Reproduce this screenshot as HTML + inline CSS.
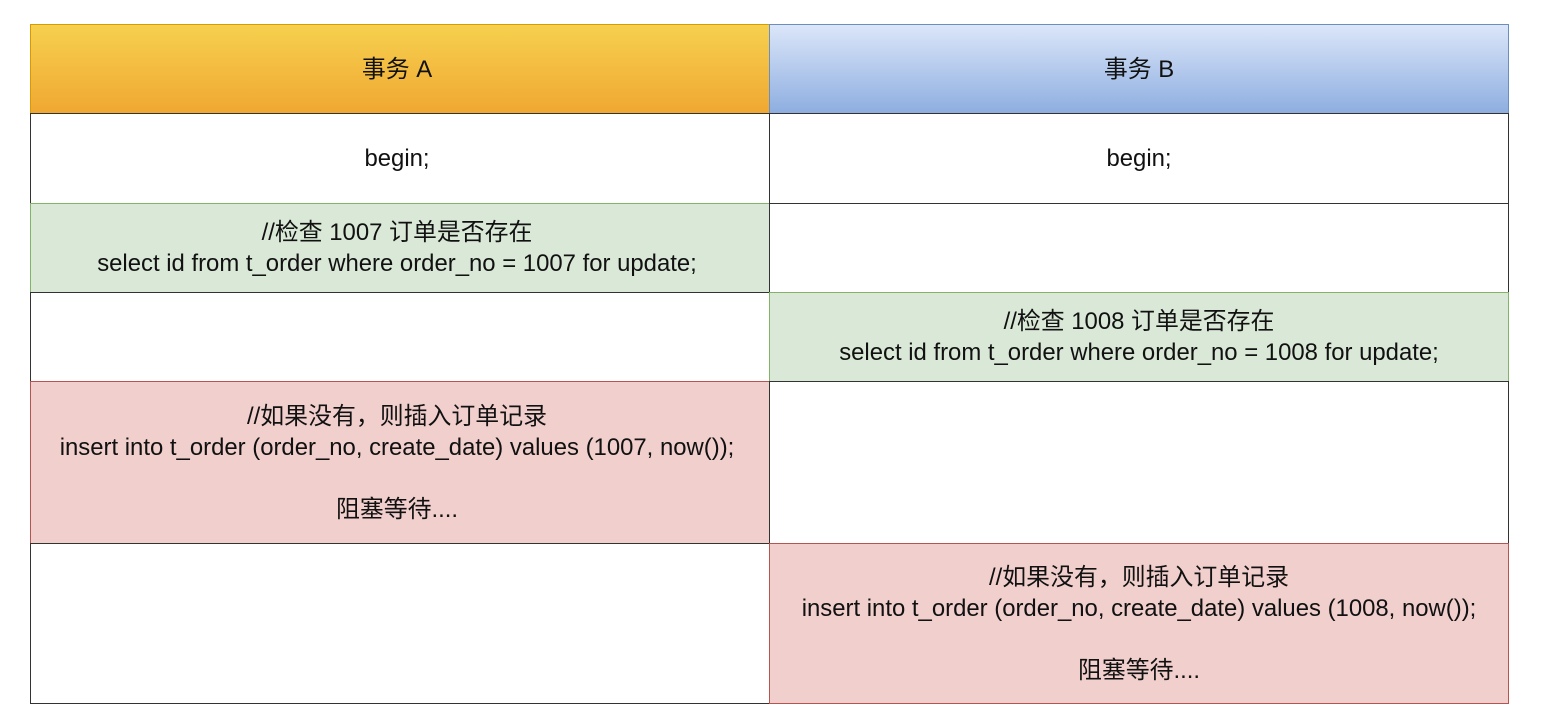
<!DOCTYPE html>
<html><head><meta charset="utf-8"><style>
body{margin:0;width:1542px;height:724px;background:#fff;position:relative;overflow:hidden;font-family:"Liberation Sans","Noto Sans CJK SC",sans-serif;color:#111;}
.c{position:absolute;box-sizing:border-box;display:flex;flex-direction:column;align-items:center;justify-content:center;text-align:center;font-size:23.9px;line-height:31px;border:1px solid #333;background:#fff;white-space:nowrap;}
.ha{background:linear-gradient(#f6d04e,#f0a832);border-color:#d79b00;}
.hb{background:linear-gradient(#dbe6f9,#8eaee0);border-color:#6c8ebf;}
.g{background:#dae8d7;border-color:#82b366;}
.r{background:#f1cfcd;border-color:#b85450;}
.l{padding-right:6px;}
</style></head><body>
<div class="c ha l" style="left:30px;top:24px;width:740px;height:90px">事务 A</div>
<div class="c hb" style="left:769px;top:24px;width:740px;height:90px">事务 B</div>
<div class="c l" style="left:30px;top:113px;width:740px;height:91px">begin;</div>
<div class="c" style="left:769px;top:113px;width:740px;height:91px">begin;</div>
<div class="c g l" style="left:30px;top:203px;width:740px;height:90px"><div>//检查 1007 订单是否存在</div><div>select id from t_order where order_no = 1007 for update;</div></div>
<div class="c" style="left:769px;top:203px;width:740px;height:90px"></div>
<div class="c" style="left:30px;top:292px;width:740px;height:90px"></div>
<div class="c g" style="left:769px;top:292px;width:740px;height:90px"><div>//检查 1008 订单是否存在</div><div>select id from t_order where order_no = 1008 for update;</div></div>
<div class="c r l" style="left:30px;top:381px;width:740px;height:163px"><div>//如果没有，则插入订单记录</div><div>insert into t_order (order_no, create_date) values (1007, now());</div><div>&nbsp;</div><div>阻塞等待....</div></div>
<div class="c" style="left:769px;top:381px;width:740px;height:163px"></div>
<div class="c" style="left:30px;top:543px;width:740px;height:161px"></div>
<div class="c r" style="left:769px;top:543px;width:740px;height:161px"><div>//如果没有，则插入订单记录</div><div>insert into t_order (order_no, create_date) values (1008, now());</div><div>&nbsp;</div><div>阻塞等待....</div></div>
</body></html>
